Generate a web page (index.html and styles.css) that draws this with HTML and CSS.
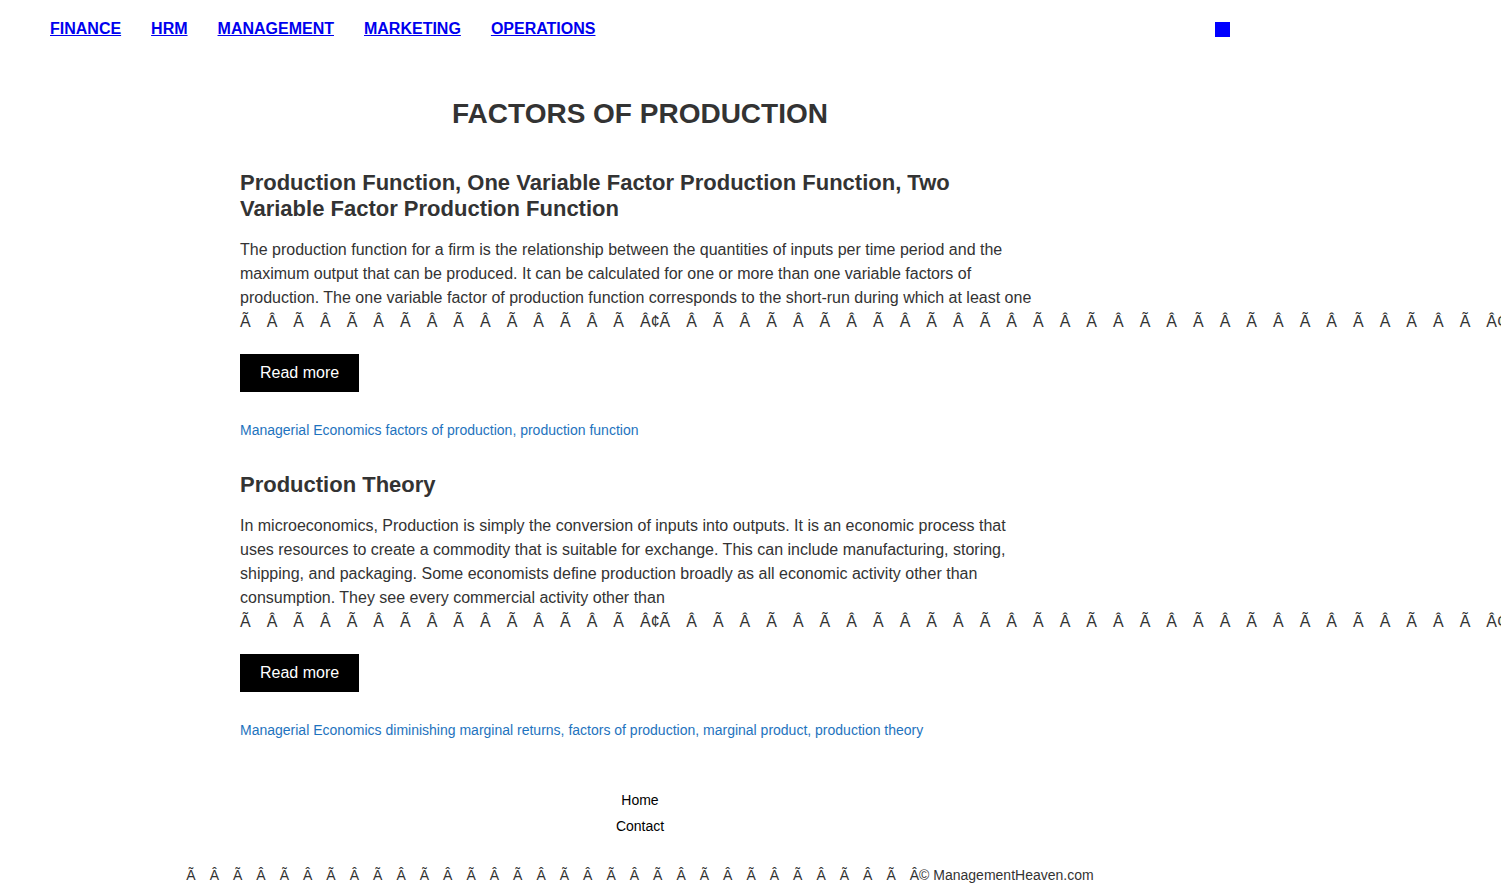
FILE: index.html
```html
<!DOCTYPE html>
<html lang="en">
<head>
<meta charset="utf-8">
<title>Factors of Production</title>
<link rel="stylesheet" href="styles.css">
</head>
<body>
<div class="page">
  <header class="header">
    <nav class="nav">
      <a href="#">FINANCE</a>
      <a href="#">HRM</a>
      <a href="#">MANAGEMENT</a>
      <a href="#">MARKETING</a>
      <a href="#">OPERATIONS</a>
    </nav>
    <span class="square"></span>
  </header>

  <main class="main">
    <h1 class="page-title">FACTORS OF PRODUCTION</h1>

    <article class="post">
      <h2 class="post-title">Production Function, One Variable Factor Production Function, Two Variable Factor Production Function</h2>
      <p class="excerpt">The production function for a firm is the relationship between the quantities of inputs per time period and the maximum output that can be produced. It can be calculated for one or more than one variable factors of production. The one variable factor of production function corresponds to the short-run during which at least one <span class="moji">Ã Â Ã Â Ã Â Ã Â Ã Â Ã Â Ã Â Ã Â¢Ã Â Ã Â Ã Â Ã Â Ã Â Ã Â Ã Â Ã Â Ã Â Ã Â Ã Â Ã Â Ã Â Ã Â Ã Â Ã Â¢Ã Â Ã Â Ã</span></p>
      <a class="btn" href="#">Read more</a>
      <div class="tags"><a href="#">Managerial Economics</a> <a href="#">factors of production</a>, <a href="#">production function</a></div>
    </article>

    <article class="post">
      <h2 class="post-title">Production Theory</h2>
      <p class="excerpt">In microeconomics, Production is simply the conversion of inputs into outputs. It is an economic process that uses resources to create a commodity that is suitable for exchange. This can include manufacturing, storing, shipping, and packaging. Some economists define production broadly as all economic activity other than consumption. They see every commercial activity other than <span class="moji">Ã Â Ã Â Ã Â Ã Â Ã Â Ã Â Ã Â Ã Â¢Ã Â Ã Â Ã Â Ã Â Ã Â Ã Â Ã Â Ã Â Ã Â Ã Â Ã Â Ã Â Ã Â Ã Â Ã Â Ã Â¢Ã Â Ã Â Ã</span></p>
      <a class="btn" href="#">Read more</a>
      <div class="tags"><a href="#">Managerial Economics</a> <a href="#">diminishing marginal returns</a>, <a href="#">factors of production</a>, <a href="#">marginal product</a>, <a href="#">production theory</a></div>
    </article>
  </main>

  <footer class="footer">
    <ul class="footer-menu">
      <li><a href="#">Home</a></li>
      <li><a href="#">Contact</a></li>
    </ul>
    <p class="copyright"><span class="moji">Ã Â Ã Â Ã Â Ã Â Ã Â Ã Â Ã Â Ã Â Ã Â Ã Â Ã Â Ã Â Ã Â Ã Â Ã Â Ã </span><span class="cw">Â© ManagementHeaven.com</span></p>
  </footer>
</div>
</body>
</html>
```

FILE: styles.css
```css
html {
  overflow-x: hidden;
}
body {
  margin: 0;
  background: #fff;
  color: #333;
  font-family: "Liberation Sans", Arial, sans-serif;
}
.page {
  width: 1280px;
  padding-top: 1px;
}
.header {
  height: 56px;
  display: flex;
  align-items: center;
  justify-content: space-between;
  padding: 0 50px;
}
.nav {
  display: flex;
  gap: 30px;
}
.nav a {
  color: #0000ee;
  font-weight: bold;
  font-size: 16px;
  text-decoration: underline;
}
.square {
  width: 15px;
  height: 15px;
  background: #0000ff;
  margin-top: 0;
}
.main {
  width: 800px;
  margin: 0 auto;
}
.page-title {
  margin: 41px 0 40px;
  font-size: 28px;
  line-height: 32px;
  text-align: center;
  color: #333;
}
.post {
  margin-bottom: 32px;
}
.post-title {
  margin: 0 0 16px;
  font-size: 22px;
  line-height: 26px;
  color: #333;
}
.excerpt {
  margin: 0 0 20px;
  font-size: 16px;
  line-height: 24px;
}
.moji {
  white-space: nowrap;
  word-spacing: 0.722em;
}
.btn {
  display: inline-block;
  background: #000;
  color: #fff;
  text-decoration: none;
  font-size: 16px;
  line-height: 18px;
  padding: 10px 20px;
}
.tags {
  margin-top: 28px;
  font-size: 14px;
  line-height: 20px;
  color: #1e73be;
}
.tags a {
  color: #1e73be;
  text-decoration: none;
}
.footer {
  text-align: center;
  padding-top: 15px;
}
.footer-menu {
  list-style: none;
  margin: 0;
  padding: 0;
}
.footer-menu li {
  font-size: 14px;
  line-height: 26px;
}
.footer-menu a {
  color: #000;
  text-decoration: none;
}
.copyright {
  margin: 26px 0 0;
  font-size: 14px;
  line-height: 20px;
  color: #333;
}
.cw {
  word-spacing: normal;
}
```
